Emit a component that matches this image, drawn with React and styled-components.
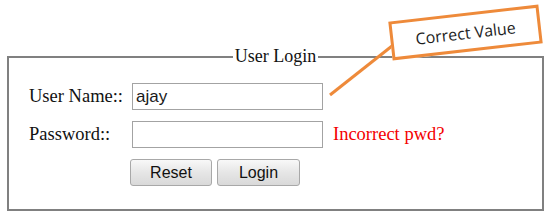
import React from 'react';
import styled, { createGlobalStyle } from 'styled-components';

const GlobalStyle = createGlobalStyle`
  html, body {
    margin: 0;
    padding: 0;
    background: #ffffff;
  }
`;

const Page = styled.div`
  position: relative;
  width: 550px;
  height: 216px;
  padding-top: 46px;
  box-sizing: border-box;
  overflow: hidden;
  font-family: "Liberation Serif", "Times New Roman", serif;
`;

const LoginBox = styled.fieldset`
  margin: 0 0 0 7px;
  width: 537px;
  box-sizing: border-box;
  border: 2px solid #808080;
  padding: 16px 0 23px 0;
`;

const Title = styled.legend`
  margin: 0 auto;
  padding: 0 2px;
  font-size: 18px;
  line-height: 21px;
  color: #111;
`;

const FormGrid = styled.div`
  display: grid;
  grid-template-columns: 103px 191px auto;
  row-gap: 11px;
  align-items: center;
  padding-left: 20px;
`;

const Label = styled.label`
  font-size: 18.5px;
  color: #111;
  white-space: nowrap;
`;

const TextInput = styled.input`
  box-sizing: border-box;
  width: 191px;
  height: 27px;
  margin: 0;
  padding: 0 3px;
  border: 1px solid #a3a3a3;
  font-family: "Liberation Sans", Arial, sans-serif;
  font-size: 17px;
  color: #1a1a1a;
  outline: none;
`;

const Hint = styled.span`
  padding-left: 10px;
  font-size: 18.5px;
  color: #f40000;
`;

const Buttons = styled.div`
  grid-column: 2 / 4;
  display: flex;
  gap: 5px;
  margin-left: -2px;
`;

const Button = styled.button`
  box-sizing: border-box;
  width: ${p => p.$w}px;
  height: 27px;
  margin: 0;
  padding: 0;
  border: 1px solid #a8a8a8;
  border-radius: 3px;
  background: linear-gradient(#f8f8f8, #e6e6e6 50%, #d9d9d9);
  font-family: "Liberation Sans", Arial, sans-serif;
  font-size: 16px;
  color: #111;
`;

const Callout = styled.div`
  position: absolute;
  left: 390px;
  top: 13px;
  width: 151px;
  height: 39px;
  box-sizing: border-box;
  border: 3px solid #ee8a3a;
  background: #fff;
  transform: rotate(-6.5deg);
  display: flex;
  align-items: center;
  justify-content: center;
  font-family: "Open Sans", sans-serif;
  font-size: 16px;
  color: #1e1e1e;
`;

const Connector = styled.svg`
  position: absolute;
  left: 0;
  top: 0;
  pointer-events: none;
`;

export default function App() {
  return (
    <Page>
      <GlobalStyle />
      <LoginBox>
        <Title>User Login</Title>
        <FormGrid>
          <Label>User Name::</Label>
          <TextInput defaultValue="ajay" />
          <span />
          <Label>Password::</Label>
          <TextInput type="password" />
          <Hint>Incorrect pwd?</Hint>
          <span />
          <Buttons>
            <Button $w={82}>Reset</Button>
            <Button $w={83}>Login</Button>
          </Buttons>
        </FormGrid>
      </LoginBox>
      <Connector width="550" height="216">
        <line x1="330" y1="95" x2="392" y2="46" stroke="#ee8a3a" strokeWidth="3" />
      </Connector>
      <Callout>Correct Value</Callout>
    </Page>
  );
}
